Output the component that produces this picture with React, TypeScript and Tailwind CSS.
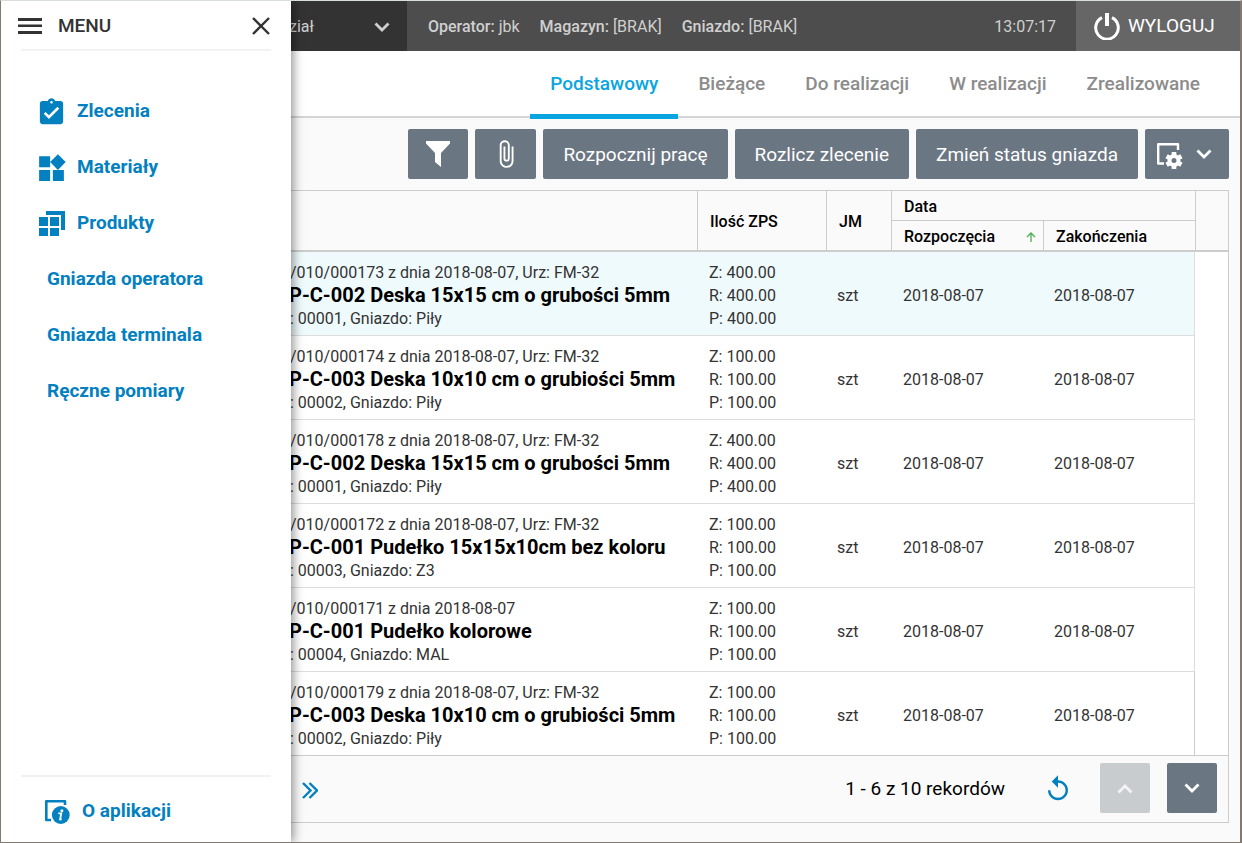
import React from "react";
import { MdAttachFile, MdReplay, MdWidgets, MdAssignmentTurnedIn } from "react-icons/md";

type Order = {
  id: number;
  document: string;
  product: string;
  workplace: string;
  quantity: string;
  unit: string;
  start: string;
  end: string;
};

const day = "2018-08-07";

const orders: Order[] = [
  { id: 173, document: "/010/000173 z dnia 2018-08-07, Urz: FM-32", product: "P-C-002 Deska 15x15 cm o grubości 5mm", workplace: ": 00001, Gniazdo: Piły", quantity: "400.00", unit: "szt", start: day, end: day },
  { id: 174, document: "/010/000174 z dnia 2018-08-07, Urz: FM-32", product: "P-C-003 Deska 10x10 cm o grubiości 5mm", workplace: ": 00002, Gniazdo: Piły", quantity: "100.00", unit: "szt", start: day, end: day },
  { id: 178, document: "/010/000178 z dnia 2018-08-07, Urz: FM-32", product: "P-C-002 Deska 15x15 cm o grubości 5mm", workplace: ": 00001, Gniazdo: Piły", quantity: "400.00", unit: "szt", start: day, end: day },
  { id: 172, document: "/010/000172 z dnia 2018-08-07, Urz: FM-32", product: "P-C-001 Pudełko 15x15x10cm bez koloru", workplace: ": 00003, Gniazdo: Z3", quantity: "100.00", unit: "szt", start: day, end: day },
  { id: 171, document: "/010/000171 z dnia 2018-08-07", product: "P-C-001 Pudełko kolorowe", workplace: ": 00004, Gniazdo: MAL", quantity: "100.00", unit: "szt", start: day, end: day },
  { id: 179, document: "/010/000179 z dnia 2018-08-07, Urz: FM-32", product: "P-C-003 Deska 10x10 cm o grubiości 5mm", workplace: ": 00002, Gniazdo: Piły", quantity: "100.00", unit: "szt", start: day, end: day },
];

const tabs = ["Podstawowy", "Bieżące", "Do realizacji", "W realizacji", "Zrealizowane"];

function Chevron({ up = false }: { up?: boolean }) {
  return (
    <svg width="16" height="10" viewBox="0 0 16 10" fill="none" stroke="currentColor" strokeWidth="2.8" aria-hidden="true">
      <path d={up ? "M1.5 8.5 8 2l6.500 6.500" : "M1.500 1.500 8 8l6.500-6.500"} />
    </svg>
  );
}

function MenuIcon() {
  return (
    <svg width="24" height="16" viewBox="0 0 24 16" fill="currentColor" aria-hidden="true">
      <path d="M0 0h24v3H0zM0 6.500h24v2.500H0zM0 13h24v3H0z" />
    </svg>
  );
}

function CloseIcon() {
  return (
    <svg width="18" height="18" viewBox="0 0 18 18" fill="none" stroke="currentColor" strokeWidth="2.400" aria-hidden="true">
      <path d="M1 1l16 16M17 1L1 17" />
    </svg>
  );
}

function PowerIcon() {
  return (
    <svg width="26" height="27" viewBox="0 0 26 27" fill="none" stroke="currentColor" aria-hidden="true">
      <path d="M8 4.700A11.300 11.300 0 1 0 18 4.700" strokeWidth="3" />
      <path d="M13 0v13" strokeWidth="4" />
    </svg>
  );
}

function ProductsIcon() {
  return (
    <svg width="26" height="26" viewBox="0 0 26 26" fill="currentColor" aria-hidden="true">
      <path d="M0 6h9v9H0zM11 6h9v9h-9zM0 17h9v8H0zM11 17h9v8h-9zM7 0h19v19h-4V4H7z" />
    </svg>
  );
}

function AboutIcon() {
  return (
    <svg width="25" height="24" viewBox="0 0 25 24" aria-hidden="true">
      <path d="M6 20H1.300V1.300H20V5" fill="none" stroke="currentColor" strokeWidth="2.600" strokeLinejoin="round" />
      <circle cx="15.800" cy="15" r="10" fill="#fff" />
      <circle cx="15.800" cy="15" r="8.900" fill="currentColor" />
      <circle cx="16.900" cy="10.700" r="1.500" fill="#fff" />
      <path d="M13.300 13.400h3l-1.200 6h1.600" fill="none" stroke="#fff" strokeWidth="1.800" />
    </svg>
  );
}

function FilterIcon() {
  return (
    <svg width="24" height="26" viewBox="0 0 24 26" fill="currentColor" aria-hidden="true">
      <path d="M0 0h24v2.500L15 12v14l-6-5v-9L0 2.500z" />
    </svg>
  );
}

function SettingsIcon() {
  return (
    <svg width="26" height="26" viewBox="0 0 26 26" aria-hidden="true">
      <path d="M7 20.500H1.200V1.200H21V7" fill="none" stroke="currentColor" strokeWidth="2.400" strokeLinejoin="round" />
      <circle cx="17" cy="17.500" r="4.500" fill="none" stroke="currentColor" strokeWidth="4" />
      <path d="M17 9v3M17 23v3M9.600 13.200l2.700 1.600M21.700 20.200l2.700 1.600M9.600 21.800l2.700-1.600M21.700 14.800l2.700-1.600" stroke="currentColor" strokeWidth="4.600" />
    </svg>
  );
}

function DoubleArrow() {
  return (
    <svg width="16" height="17" viewBox="0 0 16 17" fill="none" stroke="currentColor" strokeWidth="2.400" aria-hidden="true">
      <path d="M1 1l7.500 7.500L1 16M7.500 1L15 8.500 7.500 16" />
    </svg>
  );
}

function SortArrow() {
  return (
    <svg width="10" height="10" viewBox="0 0 10 10" fill="none" stroke="currentColor" strokeWidth="1.300" aria-label="Rosnąco">
      <path d="M5 10V1M1 5l4-4 4 4" />
    </svg>
  );
}

function MenuLink({ icon, children }: { icon?: React.ReactNode; children: React.ReactNode }) {
  return (
    <a href="#" className={`flex h-14 items-center text-[#0380bf] ${icon ? "pl-[34px]" : "pl-[46px]"}`}>
      {icon && <span className="mr-[9px] flex w-[33px] shrink-0 items-center justify-center pt-0.5">{icon}</span>}
      {children}
    </a>
  );
}

function Drawer() {
  return (
    <aside className="absolute inset-y-0 left-0 z-10 flex w-[290px] flex-col bg-white text-[19px] font-bold shadow-[2px_0_10px_rgba(0,0,0,0.45)]">
      <div className="mx-5 flex h-[50px] items-center justify-between border-b-2 border-[#f2f2f2] pt-0.5 text-[#333]">
        <div className="-ml-[3px] flex items-center gap-4 font-medium">
          <MenuIcon />
          <span>MENU</span>
        </div>
        <button type="button" aria-label="Zamknij menu" className="pr-px">
          <CloseIcon />
        </button>
      </div>
      <nav className="flex flex-col pt-8">
        <MenuLink icon={<MdAssignmentTurnedIn size={31} />}>Zlecenia</MenuLink>
        <MenuLink icon={<MdWidgets size={33} />}>Materiały</MenuLink>
        <MenuLink icon={<ProductsIcon />}>Produkty</MenuLink>
        <MenuLink>Gniazda operatora</MenuLink>
        <MenuLink>Gniazda terminala</MenuLink>
        <MenuLink>Ręczne pomiary</MenuLink>
      </nav>
      <div className="mx-5 mt-auto flex h-[67px] items-center border-t-2 border-[#f2f2f2] pl-6 pt-1">
        <a href="#" className="flex items-center gap-3 text-[#0380bf]">
          <AboutIcon />
          O aplikacji
        </a>
      </div>
    </aside>
  );
}

function TopBar() {
  return (
    <header className="flex h-[50px] items-stretch bg-[#4d4d4d] text-base text-[#d0d0d0]">
      <button type="button" className="flex w-[406px] items-center justify-between bg-[#333] pl-[288px] pr-[17px] pt-0.5">
        <span>ział</span>
        <Chevron />
      </button>
      <div className="flex items-center gap-5 pl-[21px] pt-0.5">
        <span><b className="font-medium">Operator:</b> jbk</span>
        <span><b className="font-medium">Magazyn:</b> [BRAK]</span>
        <span><b className="font-medium">Gniazdo:</b> [BRAK]</span>
      </div>
      <time className="ml-auto flex items-center pr-5 pt-0.5">13:07:17</time>
      <button type="button" className="flex w-[164px] items-center gap-2 bg-[#666] pl-[18px] pt-px text-[19px] text-white">
        <PowerIcon />
        WYLOGUJ
      </button>
    </header>
  );
}

function Tabs() {
  return (
    <nav className="flex h-[67px] justify-end border-b-2 border-[#d5d5d5] bg-white pr-5 text-[19px] font-medium">
      {tabs.map((tab, i) => (
        <button
          key={tab}
          type="button"
          className={`-mb-[3px] border-b-[5px] px-5 pt-1 ${i === 0 ? "border-[#08a5e1] text-[#08a5e1]" : "border-transparent text-[#8c8c8c]"}`}
        >
          {tab}
        </button>
      ))}
    </nav>
  );
}

const actionStyle = "flex h-[50px] items-center justify-center rounded-xs bg-[#6b7683] text-white";

function Toolbar() {
  return (
    <div className="flex justify-end gap-[7px] py-[11px] pr-[11px] text-[19px]">
      <button type="button" aria-label="Filtr" className={`${actionStyle} w-[60px]`}><FilterIcon /></button>
      <button type="button" aria-label="Załączniki" className={`${actionStyle} w-[61px]`}><MdAttachFile size={30} /></button>
      <button type="button" className={`${actionStyle} px-5 pt-0.5`}>Rozpocznij pracę</button>
      <button type="button" className={`${actionStyle} px-5 pt-0.5`}>Rozlicz zlecenie</button>
      <button type="button" className={`${actionStyle} px-5 pt-0.5`}>Zmień status gniazda</button>
      <button type="button" aria-label="Ustawienia" className={`${actionStyle} w-[84px] gap-[13px] pr-[5px] pt-1`}>
        <SettingsIcon />
        <span className="pb-1"><Chevron /></span>
      </button>
    </div>
  );
}

function OrdersTable() {
  const head = "border-l border-[#ccc] pl-3 pt-0.5 text-left font-medium";
  return (
    <table className="w-full table-fixed border-separate border-spacing-0 text-base text-[#333]">
      <colgroup>
        <col />
        <col className="w-[129px]" />
        <col className="w-[65px]" />
        <col className="w-[152px]" />
        <col className="w-[152px]" />
        <col className="w-[33px]" />
      </colgroup>
      <thead className="text-black">
        <tr className="h-[30px]">
          <th rowSpan={2} className="border-b-2 border-[#ccc]" />
          <th rowSpan={2} className={`${head} border-b-2`}>Ilość ZPS</th>
          <th rowSpan={2} className={`${head} border-b-2`}>JM</th>
          <th colSpan={2} className={`${head} border-b`}>Data</th>
          <th rowSpan={2} className="border-b-2 border-l border-[#ccc]" />
        </tr>
        <tr className="h-[31px]">
          <th className={`${head} border-b-2`}>
            <span className="flex items-center justify-between pr-[7px]">
              Rozpoczęcia
              <span className="text-[#4caf50]"><SortArrow /></span>
            </span>
          </th>
          <th className={`${head} border-b-2`}>Zakończenia</th>
        </tr>
      </thead>
      <tbody className="bg-white">
        {orders.map((order, i) => {
          const cell = `border-b pt-[3px] ${i === orders.length - 1 ? "border-[#ccc]" : "border-[#ddd]"} ${i === 0 ? "bg-[#effafd]" : ""}`;
          return (
            <tr key={order.id} className="h-[84px] leading-[23px]">
              <td className={`${cell} whitespace-nowrap pl-[289px]`}>
                <div>{order.document}</div>
                <div className="-ml-px text-[20px] font-bold text-black">{order.product}</div>
                <div>{order.workplace}</div>
              </td>
              <td className={`${cell} pl-3`}>
                <div>Z: {order.quantity}</div>
                <div>R: {order.quantity}</div>
                <div>P: {order.quantity}</div>
              </td>
              <td className={`${cell} pl-[11px]`}>{order.unit}</td>
              <td className={`${cell} pl-3`}>{order.start}</td>
              <td className={`${cell} border-r pl-[11px]`}>{order.end}</td>
              <td className={i === orders.length - 1 ? "border-b border-[#ccc]" : ""} />
            </tr>
          );
        })}
      </tbody>
    </table>
  );
}

function Pager() {
  return (
    <div className="flex h-[66px] items-center pb-0.5 pl-[301px] pr-[11px]">
      <button type="button" aria-label="Ostatnia strona" className="pt-1 text-[#0380bf]"><DoubleArrow /></button>
      <span className="ml-auto pt-0.5 text-[19px] text-black">1 - 6 z 10 rekordów</span>
      <button type="button" aria-label="Odśwież" className="ml-[38px] mr-[27px] pt-0.5 text-[#0380bf]"><MdReplay size={30} /></button>
      <button type="button" disabled aria-label="Poprzednia strona" className="mr-[17px] flex size-[50px] items-center justify-center rounded-xs bg-[#c8cccf] pt-0.5 text-[#f4f4f4]"><Chevron up /></button>
      <button type="button" aria-label="Następna strona" className="flex size-[50px] items-center justify-center rounded-xs bg-[#6b7683] text-white"><Chevron /></button>
    </div>
  );
}

export default function App() {
  return (
    <div className="relative flex min-h-screen flex-col overflow-hidden border border-r-2 border-[#85786c] border-t-[#d9dedb] bg-[#fafafa] font-[Roboto,sans-serif]">
      <Drawer />
      <TopBar />
      <Tabs />
      <main>
        <Toolbar />
        <div className="mr-[11px] border border-l-0 border-[#ccc]">
          <OrdersTable />
          <Pager />
        </div>
      </main>
    </div>
  );
}
